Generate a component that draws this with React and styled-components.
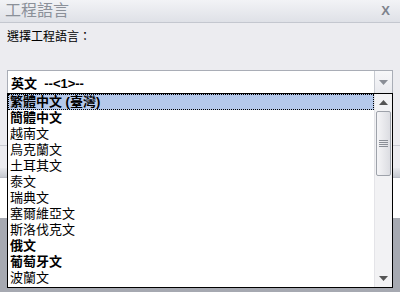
import React from "react";
import styled, { createGlobalStyle } from "styled-components";

const GlobalStyle = createGlobalStyle`
  html, body { margin: 0; padding: 0; background: #ececf0; }
  body { font-family: "Liberation Sans", "Noto Sans CJK TC", sans-serif; }
`;

const Frame = styled.div`
  position: relative;
  width: 400px;
  height: 292px;
  overflow: hidden;
  display: flex;
  flex-direction: column;
  background: #ececf0;
`;

const TitleBar = styled.div`
  height: 22px;
  flex: none;
  display: flex;
  align-items: center;
  justify-content: space-between;
  padding: 0 10px 0 5px;
  background: linear-gradient(#f2f3f6, #dfe1e7);
  border-bottom: 1px solid #c4c7cf;
  color: #8b9099;
  font-size: 16px;
  line-height: 22px;
`;

const Close = styled.span`
  font-weight: bold;
  font-size: 13px;
  color: #7d828c;
`;

const Body = styled.div`
  height: 116px;
  flex: none;
  display: flex;
  flex-direction: column;
  padding: 6px 7px 0 7px;
  border-bottom: 1px solid #c9cbd2;
`;

const Label = styled.div`
  font-size: 12px;
  line-height: 16px;
  color: #000;
  height: 41px;
`;

const Combo = styled.div`
  height: 22px;
  display: flex;
  align-items: stretch;
  background: #fff;
  border: 1px solid #a9adb6;
`;

const ComboText = styled.div`
  flex: 1;
  display: flex;
  align-items: center;
  padding-left: 3px;
  font-size: 13px;
  font-weight: bold;
  white-space: pre;
`;

const ComboButton = styled.div`
  width: 17px;
  display: flex;
  align-items: center;
  justify-content: center;
  border-left: 1px solid #c7cad1;
  background: linear-gradient(#f7f7f9, #e9eaee);
`;

const Gap = styled.div`
  height: 22px;
  flex: none;
`;

const Band = styled.div`
  height: 9px;
  flex: none;
  background: linear-gradient(#e6e7eb, #c6c9d0);
  border-bottom: 1px solid #b9bcc4;
`;

const White = styled.div`
  height: 40px;
  flex: none;
  background: #fff;
`;

const Dark = styled.div`
  flex: 1;
  background: #a6a9b1;
`;

const Popup = styled.div`
  position: absolute;
  left: 7px;
  top: 93px;
  width: 384px;
  height: 193px;
  display: flex;
  background: #fff;
  border: 1px solid #000;
`;

const List = styled.div`
  flex: 1;
  display: flex;
  flex-direction: column;
`;

const Item = styled.div`
  height: 16px;
  flex: none;
  box-sizing: border-box;
  display: flex;
  align-items: center;
  padding-left: 1px;
  font-size: 13px;
  line-height: 14px;
  white-space: pre;
  font-weight: ${(p) => (p.$bold ? "bold" : "normal")};
  background: ${(p) => (p.$selected ? "#b5c9eb" : "transparent")};
  border: 1px dotted ${(p) => (p.$selected ? "#000" : "transparent")};
  color: #000;
`;

const Scrollbar = styled.div`
  width: 17px;
  flex: none;
  display: flex;
  flex-direction: column;
  background: #f2f2f4;
  border-left: 1px solid #e4e4e8;
`;

const Arrow = styled.div`
  height: 17px;
  flex: none;
  display: flex;
  align-items: center;
  justify-content: center;
`;

const Thumb = styled.div`
  height: 63px;
  margin: 0 1px;
  flex: none;
  display: flex;
  align-items: center;
  justify-content: center;
  border: 1px solid #9ea2aa;
  border-radius: 2px;
  background: linear-gradient(90deg, #f5f5f7, #dcdde2);
`;

const Track = styled.div`
  flex: 1;
`;

const Tri = ({ up, color = "#555" }) => (
  <svg width="9" height="5" viewBox="0 0 9 5">
    <path d={up ? "M0 5 L4.5 0 L9 5 Z" : "M0 0 L9 0 L4.5 5 Z"} fill={color} />
  </svg>
);

const Grip = () => (
  <svg width="9" height="7" viewBox="0 0 9 7">
    {[0, 2, 4, 6].map((y) => (
      <rect key={y} x="0" y={y} width="9" height="1" fill="#8a8e96" />
    ))}
  </svg>
);

const items = [
  { t: "繁體中文 (臺灣)", b: true, s: true },
  { t: "簡體中文", b: true },
  { t: "越南文" },
  { t: "烏克蘭文" },
  { t: "土耳其文" },
  { t: "泰文" },
  { t: "瑞典文" },
  { t: "塞爾維亞文" },
  { t: "斯洛伐克文" },
  { t: "俄文", b: true },
  { t: "葡萄牙文", b: true },
  { t: "波蘭文" },
];

export default function App() {
  return (
    <>
      <GlobalStyle />
      <Frame>
        <TitleBar>
          <span>工程語言</span>
          <Close>X</Close>
        </TitleBar>
        <Body>
          <Label>選擇工程語言：</Label>
          <Combo>
            <ComboText>英文  --&lt;1&gt;--</ComboText>
            <ComboButton>
              <Tri color="#8a8e96" />
            </ComboButton>
          </Combo>
        </Body>
        <Gap />
        <Band />
        <White />
        <Dark />
        <Popup>
          <List>
            {items.map((it) => (
              <Item key={it.t} $bold={it.b} $selected={it.s}>
                {it.t}
              </Item>
            ))}
          </List>
          <Scrollbar>
            <Arrow>
              <Tri up />
            </Arrow>
            <Thumb>
              <Grip />
            </Thumb>
            <Track />
            <Arrow>
              <Tri />
            </Arrow>
          </Scrollbar>
        </Popup>
      </Frame>
    </>
  );
}
